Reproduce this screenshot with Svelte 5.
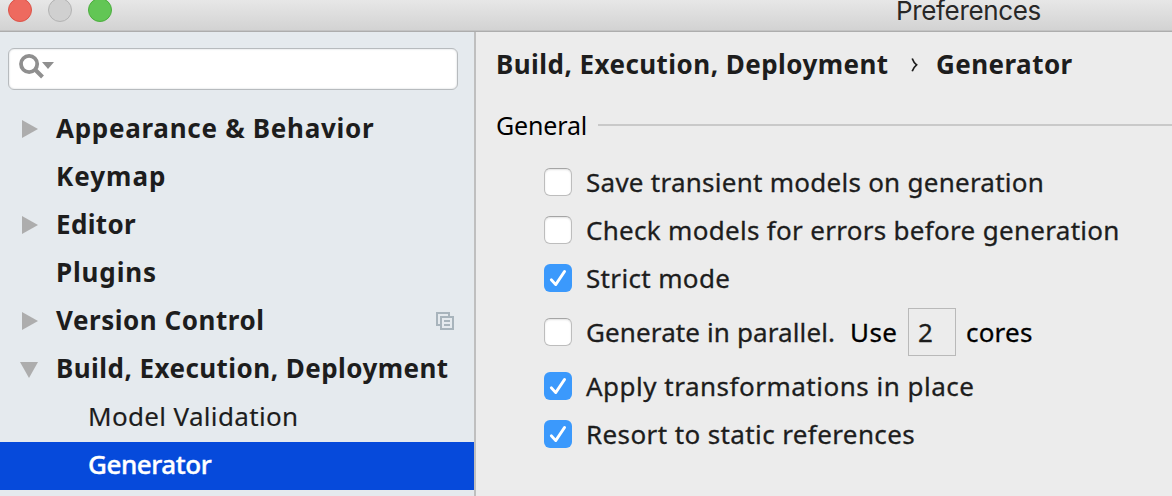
<script>
  const tree = [
    { label: 'Appearance & Behavior', kind: 'group', arrow: 'right', ls: 0.72 },
    { label: 'Keymap', kind: 'group', ls: 1 },
    { label: 'Editor', kind: 'group', arrow: 'right', ls: 0.35 },
    { label: 'Plugins', kind: 'group', ls: 0.85 },
    { label: 'Version Control', kind: 'group', arrow: 'right', ls: 0.54, copy: true },
    { label: 'Build, Execution, Deployment', kind: 'group', arrow: 'down', ls: 0.45 },
    { label: 'Model Validation', kind: 'leaf', ls: 0.34 },
    { label: 'Generator', kind: 'leaf', selected: true, ls: -0.45 }
  ];
  const options = [
    { label: 'Save transient models on generation', ls: 0.26 },
    { label: 'Check models for errors before generation', ls: 0.3 },
    { label: 'Strict mode', checked: true, ls: 0.35 },
    { label: 'Generate in parallel.', ls: 0.12, cores: true },
    { label: 'Apply transformations in place', checked: true, ls: 0.5 },
    { label: 'Resort to static references', checked: true, ls: 0.39 }
  ];
</script>

<div class="window">
  <header class="titlebar">
    <div class="lights"><i class="close"></i><i class="min"></i><i class="max"></i></div>
    <span class="title">Preferences</span>
  </header>
  <div class="body">
    <aside>
      <div class="search">
        <svg width="40" height="32" viewBox="0 0 40 32">
          <circle cx="11.1" cy="11" r="8.1" fill="none" stroke="#8f8f8f" stroke-width="3.8" />
          <path d="M17 16.5 L24.5 24" stroke="#8f8f8f" stroke-width="4" />
          <path d="M24 9h12l-6 7z" fill="#8f8f8f" />
        </svg>
      </div>
      <nav>
        {#each tree as item}
          <div class="row {item.kind}" class:selected={item.selected}>
            {#if item.kind === 'group'}
              <svg class="arrow" width="20" height="48" viewBox="0 0 20 48">
                {#if item.arrow === 'right'}<path d="M2 14L18 23L2 32z" fill="#adadad" />{/if}
                {#if item.arrow === 'down'}<path d="M0 16H18L9 32z" fill="#adadad" />{/if}
              </svg>
            {/if}
            <span class="label" style="letter-spacing:{item.ls}px">{item.label}</span>
            {#if item.copy}
              <svg class="copy" width="18" height="18" viewBox="0 0 18 18" fill="none" stroke="#a8b4bc" stroke-width="2">
                <path d="M4 13H1V1H13V4M5 5H17V17H5zM8 9H14M8 13H14" />
              </svg>
            {/if}
          </div>
        {/each}
      </nav>
    </aside>
    <main>
      <div class="crumbs">
        <b class="path">Build, Execution, Deployment</b>
        <svg width="8" height="16" viewBox="0 0 8 16"><path d="M1.2 1.5Q2.6 5.5 5.6 7.8Q2.6 10.2 1.2 14.2" fill="none" stroke="#1d1d1d" stroke-width="1.7" /></svg>
        <b class="page">Generator</b>
      </div>
      <div class="section"><span>General</span><hr /></div>
      <div class="options">
        {#each options as o}
          <div class="option" class:tall={o.cores}>
            <span class="box" class:checked={o.checked}>
              {#if o.checked}
                <svg width="28" height="28" viewBox="0 0 28 28"><path d="M7.3 15.7L11.7 20.6L20.6 7.4" fill="none" stroke="#fff" stroke-width="2.8" stroke-linecap="round" stroke-linejoin="round" /></svg>
              {/if}
            </span>
            <span class="text" style="letter-spacing:{o.ls}px">{o.label}</span>
            {#if o.cores}
              <span class="use">Use</span>
              <span class="field">2</span>
              <span class="cores">cores</span>
            {/if}
          </div>
        {/each}
      </div>
    </main>
  </div>
</div>

<style>
  :global(body) { margin: 0; overflow: hidden; }
  .window { width: 1172px; height: 496px; overflow: hidden; display: flex; flex-direction: column; font: 26px/48px "Noto Sans", "Open Sans", sans-serif; color: #1d1d1d; white-space: nowrap; }
  .titlebar { flex: none; box-sizing: border-box; height: 32px; display: flex; background: linear-gradient(#e7e7e7, #d2d2d2); border-bottom: 1px solid #adadad; box-shadow: inset 0 -1px #c3c3c3; }
  .lights { display: flex; gap: 16px; margin-top: -2px; padding-left: 8px; width: 887px; }
  .lights i { box-sizing: border-box; width: 24px; height: 24px; border-radius: 50%; border: 1px solid; }
  .close { background: #ee6a5f; border-color: #dc5449 !important; }
  .min { background: #d0d0d0; border-color: #b3b3b3 !important; }
  .max { background: #62c655; border-color: #4cae3e !important; }
  .title { font: 26px/22px Inter, sans-serif; letter-spacing: -0.35px; padding-left: 1px; color: #272727; }
  .body { flex: 1; display: flex; }
  aside { width: 474px; background: #e5eaee; border-right: 2px solid #bfbfbf; flex: none; }
  .search { box-sizing: border-box; width: 450px; height: 42px; margin: 16px 8px; border: 1px solid #b7bbbe; border-radius: 6px; background: #fff; padding: 4px 0 0 9px; display: flex; box-shadow: inset 0 0 2px #c9cdd0; }
  .row { box-sizing: border-box; height: 48px; display: flex; padding-left: 20px; }
  .label { line-height: 44px; }
  .group .label { font-weight: 700; margin-left: 16px; flex: 1; }
  .leaf { padding-left: 88px; }
  .leaf .label { -webkit-text-stroke: 0.15px currentColor; }
  .selected { background: #064adb; color: #fff; }
  .selected .label { font-weight: 500; -webkit-text-stroke: 0.4px #fff; }
  .copy { margin: 14px 20px 0 0; }
  main { flex: 1; background: #ececec; min-width: 0; }
  .crumbs { display: flex; height: 64px; padding-left: 20px; line-height: 64px; }
  .path { letter-spacing: 0.45px; width: 415px; }
  .crumbs svg { margin-top: 25px; }
  .page { letter-spacing: 0.45px; margin-left: 17px; }
  .section { display: flex; align-items: center; height: 62px; padding-left: 20px; font-size: 25px; color: #000; }
  .section span { width: 102px; line-height: 58px; letter-spacing: -0.15px; margin-top: -4px; }
  .section hr { flex: 1; height: 2px; border: 0; margin: -4px 0 0; background: #c9c9c9; }
  .options { padding-left: 68px; -webkit-text-stroke: 0.3px currentColor; }
  .option { display: flex; align-items: center; height: 48px; }
  .tall { height: 60px; }
  .box { box-sizing: border-box; width: 28px; height: 28px; border-radius: 6px; border: 1px solid #bdbdbd; border-top-color: #a5a5a5; background: #fff; box-shadow: inset 0 1px 2px #e2e2e2; }
  .checked { border: 0; background: #3b99fc; box-shadow: none; }
  .box svg { display: block; }
  .text { margin-left: 14px; }
  .tall .text { width: 264px; }
  .use { width: 58px; letter-spacing: 0.4px; color: #000; }
  .field { box-sizing: border-box; width: 48px; height: 48px; border: 1px solid #b9b9b9; line-height: 46px; padding-left: 9px; }
  .cores { margin-left: 10px; letter-spacing: 0.2px; color: #000; }
</style>
